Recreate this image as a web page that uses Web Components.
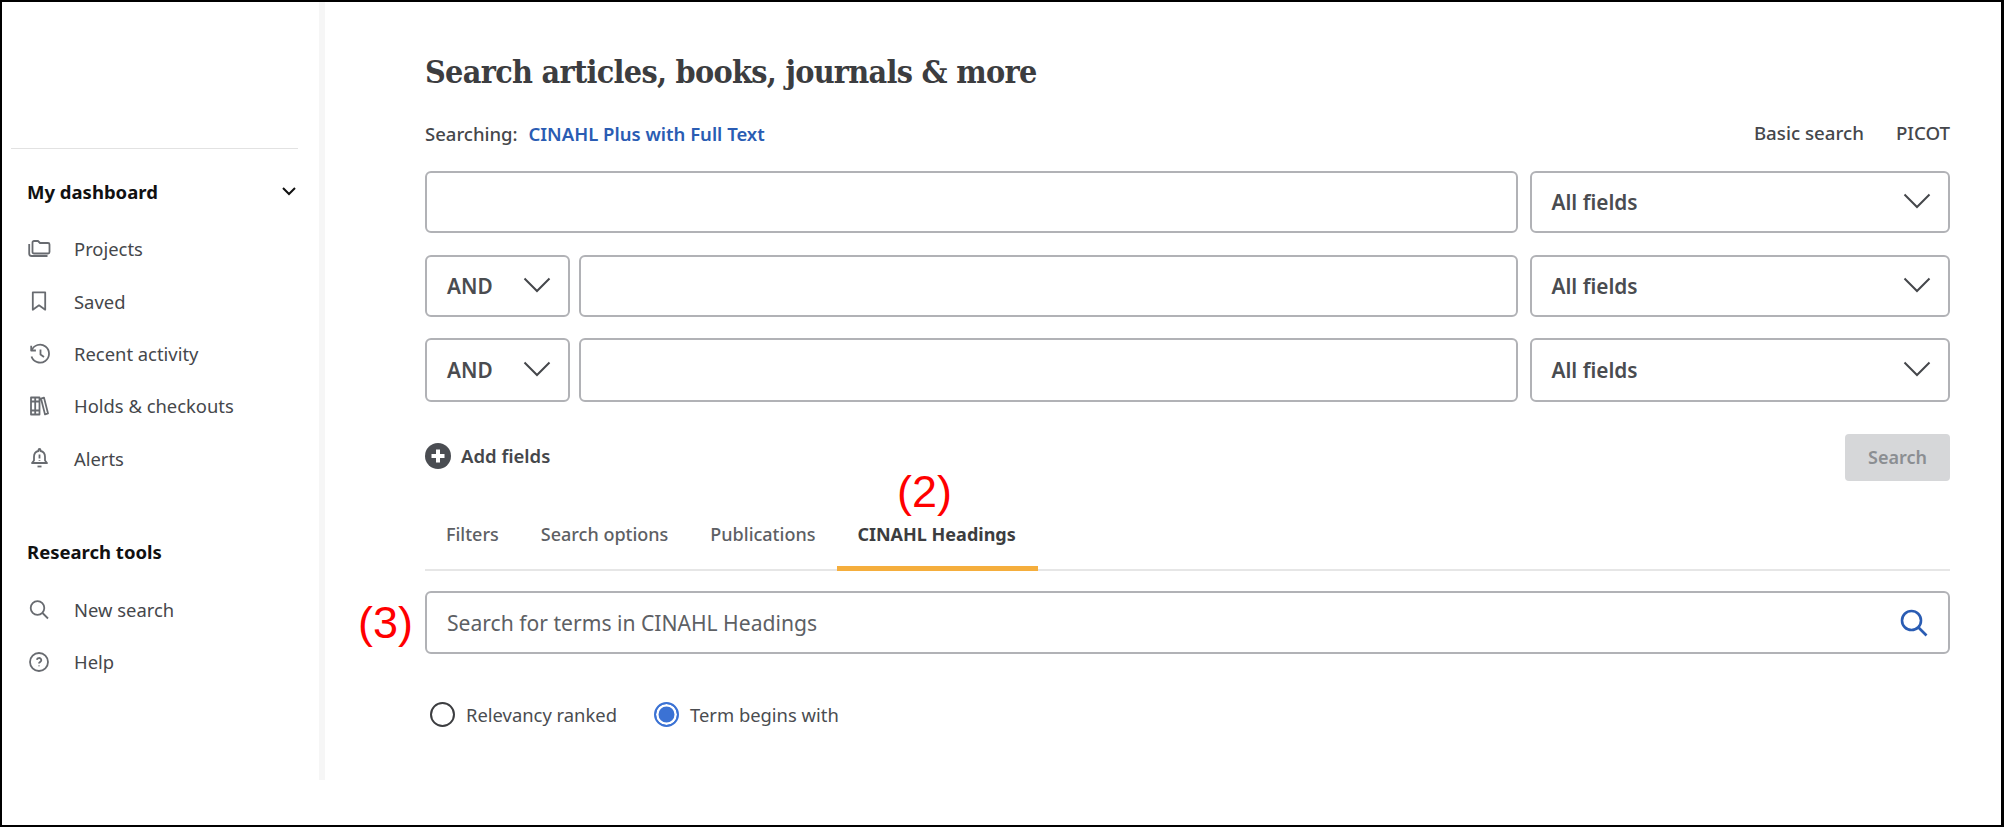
<!DOCTYPE html>
<html lang="en">
<head>
<meta charset="utf-8">
<title>Advanced search</title>
<style>
  html, body { margin: 0; background: #fff; }
  body { font-family: "Noto Sans", "Open Sans", sans-serif; color: #45474b; }
</style>
</head>
<body>
<search-page>
  <side-nav slot="side">
    <nav-heading chevron>My dashboard</nav-heading>
    <nav-item icon="projects">Projects</nav-item>
    <nav-item icon="saved">Saved</nav-item>
    <nav-item icon="recent">Recent activity</nav-item>
    <nav-item icon="holds">Holds &amp; checkouts</nav-item>
    <nav-item icon="alerts">Alerts</nav-item>
    <nav-heading class="tools">Research tools</nav-heading>
    <nav-item icon="search">New search</nav-item>
    <nav-item icon="help">Help</nav-item>
  </side-nav>
  <search-form>
    <query-row><field-select slot="end">All fields</field-select></query-row>
    <query-row class="second"><field-select slot="start" narrow>AND</field-select><field-select slot="end">All fields</field-select></query-row>
    <query-row class="third"><field-select slot="start" narrow>AND</field-select><field-select slot="end">All fields</field-select></query-row>
  </search-form>
</search-page>

<script>
const ICONS = {
  projects: `<path d="M6 4h4l2 2h8a1.5 1.5 0 0 1 1.500 1.500V15a1.500 1.500 0 0 1-1.500 1.500H6A1.500 1.500 0 0 1 4.500 15V5.500A1.500 1.500 0 0 1 6 4Z"/><path d="M1.200 7v9.500A2.500 2.500 0 0 0 3.700 19h15.800"/>`,
  saved: `<path d="M4.800 3.300h12.400v17.400L11 16.300 4.800 20.700Z"/>`,
  recent: `<path d="M3.200 3.800v4.700h4.700"/><path d="M3.600 8.500A9 9 0 1 1 3.500 14.500"/><path d="M12.500 7.500v5l3.500 2.500"/>`,
  holds: `<path d="M3 3.500h4.200v17H3ZM7.200 3.500h4.300v17H7.200ZM13 4.600l3-1 4 15.800-3 1ZM3 7.500h8.500M3 16.500h8.500"/>`,
  alerts: `<path d="M11.500 3a1 1 0 0 1 1 1v1c3 .6 4.500 2.800 4.500 5.800v3.700l2 2.500H4l2-2.500v-3.700C6 7.800 7.500 5.600 10.500 5V4a1 1 0 0 1 1-1Z"/><path d="M9.500 20.500h4"/><path d="M11.500 8.500v4M11.500 14v.8"/>`,
  search: `<circle cx="9.500" cy="10" r="6.800"/><path d="M14.500 15l5.500 5.500"/>`,
  help: `<circle cx="11" cy="12" r="9"/><path d="M8.800 9.800A2.300 2.300 0 0 1 11 8a2.200 2.200 0 0 1 2.300 2.200c0 1.700-2.300 1.800-2.300 3.300M11 15.500v.8"/>`
};

class SearchPage extends HTMLElement {
  static get is() { return "search-page"; }
  constructor() {
    super();
    this.attachShadow({ mode: "open" });
    this.shadowRoot.innerHTML = `
      <style>
        :host {
          display: flex;
          position: relative;
          box-sizing: border-box;
          width: 2004px;
          height: 827px;
          border: 2px solid #000;
          border-right-width: 3px;
          overflow: hidden;
        }
        .note {
          position: absolute;
          font: 45px/48px "Liberation Sans", Arial, sans-serif;
          color: #f00;
        }
        .two { left: 895px; top: 466px; }
        .three { left: 356px; top: 597px; }
      </style>
      <slot name="side"></slot>
      <slot></slot>
      <span class="note two">(2)</span>
      <span class="note three">(3)</span>
    `;
  }
}

class SideNav extends HTMLElement {
  static get is() { return "side-nav"; }
  constructor() {
    super();
    this.attachShadow({ mode: "open" });
    this.shadowRoot.innerHTML = `
      <style>
        :host {
          display: block;
          flex: none;
          box-sizing: border-box;
          width: 323px;
          height: 778px;
          padding-top: 146px;
          border-right: 6px solid #f6f6f6;
        }
        hr {
          margin: 0 21px 30px 9px;
          border: 0;
          border-top: 1px solid #e2e2e2;
        }
      </style>
      <hr>
      <slot></slot>
    `;
  }
}

class NavHeading extends HTMLElement {
  static get is() { return "nav-heading"; }
  constructor() {
    super();
    this.attachShadow({ mode: "open" });
    const chevron = this.hasAttribute("chevron")
      ? `<svg width="16" height="10" viewBox="0 0 16 10"><path d="M2 2l6 6 6-6" fill="none" stroke="#111" stroke-width="2"/></svg>`
      : "";
    this.shadowRoot.innerHTML = `
      <style>
        :host {
          display: flex;
          align-items: center;
          justify-content: space-between;
          height: 24px;
          margin-bottom: 19.6px;
          padding: 0 22px 0 25px;
          font-size: 18.5px;
          font-weight: 700;
          color: #111;
        }
        :host(.tools) { margin-top: 55.4px; margin-bottom: 19.4px; }
      </style>
      <span><slot></slot></span>${chevron}
    `;
  }
}

class NavItem extends HTMLElement {
  static get is() { return "nav-item"; }
  constructor() {
    super();
    this.attachShadow({ mode: "open" });
    const icon = ICONS[this.getAttribute("icon")] || "";
    this.shadowRoot.innerHTML = `
      <style>
        :host {
          display: flex;
          align-items: center;
          gap: 22px;
          height: 52.4px;
          padding-left: 26px;
          font-size: 18.4px;
          color: #45474b;
        }
        svg {
          flex: none;
          width: 24px;
          height: 24px;
          fill: none;
          stroke: #686b70;
          stroke-width: 1.8;
          stroke-linejoin: round;
        }
      </style>
      <svg viewBox="0 0 24 24">${icon}</svg>
      <span><slot></slot></span>
    `;
  }
}

class SearchForm extends HTMLElement {
  static get is() { return "search-form"; }
  constructor() {
    super();
    this.attachShadow({ mode: "open" });
    this.shadowRoot.innerHTML = `
      <style>
        :host {
          display: block;
          flex: 1;
          min-width: 0;
          padding: 50px 51px 0 100px;
        }
        h1 {
          margin: 0 0 30px;
          font: 700 32px/40px "DejaVu Serif", "Liberation Serif", serif;
          font-stretch: condensed;
          letter-spacing: -0.7px;
          color: #3c3d40;
        }
        .scope {
          display: flex;
          align-items: center;
          justify-content: space-between;
          height: 24px;
          margin-bottom: 25px;
          font-size: 18.5px;
          font-weight: 500;
        }
        .scope > span:first-child { margin-top: -1px; }
        .scope a { margin-left: 6px; color: #2a5cb3; font-weight: 600; }
        .links { display: flex; gap: 32px; font-size: 18.7px; position: relative; top: -2px; }
        .actions {
          display: flex;
          align-items: center;
          justify-content: space-between;
          margin-top: 32px;
        }
        .add { display: flex; align-items: center; gap: 10px; font-size: 18.5px; font-weight: 600; margin-top: -4px; }
        .go {
          width: 105px;
          height: 47px;
          border-radius: 4px;
          background: #d6d7d9;
          color: #8b8e92;
          font-size: 18px;
          font-weight: 600;
          line-height: 46px;
          text-align: center;
        }
        tab-strip { margin-top: 24px; }
        text-box.terms { margin-top: 20px; height: 63px; padding: 0 20px; }
        .radios { display: flex; gap: 37px; margin: 48px 0 0 5px; }
      </style>
      <h1>Search articles, books, journals &amp; more</h1>
      <div class="scope">
        <span>Searching: <a>CINAHL Plus with Full Text</a></span>
        <span class="links"><span>Basic search</span><span>PICOT</span></span>
      </div>
      <slot></slot>
      <div class="actions">
        <span class="add">
          <svg width="26" height="26" viewBox="0 0 26 26"><circle cx="13" cy="13" r="13" fill="#4a4d52"/><path d="M13 6.500v13M6.500 13h13" stroke="#fff" stroke-width="4"/></svg>
          Add fields
        </span>
        <span class="go">Search</span>
      </div>
      <tab-strip></tab-strip>
      <text-box class="terms" placeholder="Search for terms in CINAHL Headings" search></text-box>
      <div class="radios">
        <radio-option>Relevancy ranked</radio-option>
        <radio-option checked>Term begins with</radio-option>
      </div>
    `;
  }
}

class QueryRow extends HTMLElement {
  static get is() { return "query-row"; }
  constructor() {
    super();
    this.attachShadow({ mode: "open" });
    this.shadowRoot.innerHTML = `
      <style>
        :host { display: flex; gap: 11.5px; height: 62px; }
        :host(.second) { margin-top: 22px; }
        :host(.third) { margin-top: 21px; height: 64px; }
        ::slotted([narrow]) { margin-right: -3px; }
      </style>
      <slot name="start"></slot>
      <text-box></text-box>
      <slot name="end"></slot>
    `;
  }
}

class TextBox extends HTMLElement {
  static get is() { return "text-box"; }
  constructor() {
    super();
    this.attachShadow({ mode: "open" });
    const icon = this.hasAttribute("search")
      ? `<svg width="28" height="28" viewBox="0 0 28 28" fill="none" stroke="#2a5cb3" stroke-width="2.600"><circle cx="11.500" cy="11.500" r="9.500"/><path d="M18.500 18.500l8 8"/></svg>`
      : "";
    this.shadowRoot.innerHTML = `
      <style>
        :host {
          display: flex;
          flex: 1;
          min-width: 0;
          align-items: center;
          justify-content: space-between;
          box-sizing: border-box;
          padding: 0 21px;
          border: 2px solid #b1b2b6;
          border-radius: 6px;
          font-size: 21.1px;
          color: #5d6064;
        }
      </style>
      <span>${this.getAttribute("placeholder") || ""}</span>${icon}
    `;
  }
}

class FieldSelect extends HTMLElement {
  static get is() { return "field-select"; }
  constructor() {
    super();
    this.attachShadow({ mode: "open" });
    this.shadowRoot.innerHTML = `
      <style>
        :host {
          display: flex;
          flex: none;
          align-items: center;
          justify-content: space-between;
          box-sizing: border-box;
          width: 420.5px;
          padding: 0 17px 0 20px;
          border: 2px solid #b1b2b6;
          border-radius: 6px;
          font-size: 20.8px;
          font-weight: 600;
          color: #4a4c50;
        }
        :host([narrow]) { width: 145px; padding-right: 17px; }
        span { margin-top: -1px; }
        svg { margin-top: -3px; }
      </style>
      <span><slot></slot></span>
      <svg width="28" height="16" viewBox="0 0 28 16"><path d="M1.500 1.500L14 14 26.500 1.500" fill="none" stroke="#45474b" stroke-width="2"/></svg>
    `;
  }
}

class TabStrip extends HTMLElement {
  static get is() { return "tab-strip"; }
  constructor() {
    super();
    this.attachShadow({ mode: "open" });
    this.shadowRoot.innerHTML = `
      <style>
        :host {
          display: flex;
          box-sizing: border-box;
          height: 66px;
          border-bottom: 2px solid #e6e6e6;
          font-size: 18px;
          font-weight: 500;
          color: #5d6064;
        }
        span {
          box-sizing: border-box;
          height: 66px;
          padding: 17px 21px 0;
          border-bottom: 5px solid transparent;
          line-height: 24px;
        }
        .on {
          margin-left: 1px;
          padding: 17px 22px 0 20px;
          border-color: #f5ae3d;
          color: #3c3d40;
          font-weight: 700;
        }
      </style>
      <span>Filters</span>
      <span>Search options</span>
      <span>Publications</span>
      <span class="on">CINAHL Headings</span>
    `;
  }
}

class RadioOption extends HTMLElement {
  static get is() { return "radio-option"; }
  constructor() {
    super();
    this.attachShadow({ mode: "open" });
    this.shadowRoot.innerHTML = `
      <style>
        :host {
          display: flex;
          align-items: center;
          gap: 11px;
          height: 25px;
          font-size: 18.4px;
          color: #4a4c50;
        }
        i {
          box-sizing: border-box;
          width: 25px;
          height: 25px;
          border: 2px solid #3c3d40;
          border-radius: 50%;
        }
        :host([checked]) i {
          border-color: #3b72d4;
          background: #3b72d4;
          box-shadow: inset 0 0 0 2.500px #fff;
        }
      </style>
      <i></i>
      <span><slot></slot></span>
    `;
  }
}

[SearchPage, SideNav, NavHeading, NavItem, SearchForm, QueryRow, TextBox, FieldSelect, TabStrip, RadioOption]
  .forEach((el) => customElements.define(el.is, el));
</script>
</body>
</html>
